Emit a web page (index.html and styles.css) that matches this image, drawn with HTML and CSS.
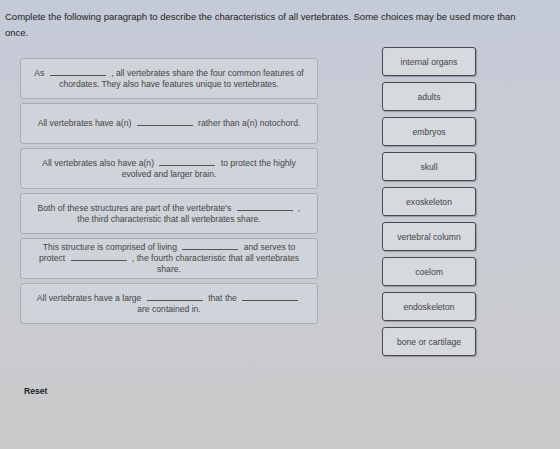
FILE: index.html
```html
<!DOCTYPE html>
<html lang="en">
<head>
  <meta charset="UTF-8">
  <title>Vertebrates - Drag and Drop</title>
  <link rel="stylesheet" href="styles.css">
</head>
<body>
  <p class="intro">Complete the following paragraph to describe the characteristics of all vertebrates. Some choices may be used more than once.</p>

  <div class="task">
    <div class="prompts">
      <div class="prompt"><p>As <span class="blank"></span> , all vertebrates share the four common features of<br>chordates. They also have features unique to vertebrates.</p></div>
      <div class="prompt"><p>All vertebrates have a(n) <span class="blank"></span> rather than a(n) notochord.</p></div>
      <div class="prompt"><p>All vertebrates also have a(n) <span class="blank"></span> to protect the highly<br>evolved and larger brain.</p></div>
      <div class="prompt"><p>Both of these structures are part of the vertebrate's <span class="blank"></span> ,<br>the third characteristic that all vertebrates share.</p></div>
      <div class="prompt"><p>This structure is comprised of living <span class="blank"></span> and serves to<br>protect <span class="blank"></span> , the fourth characteristic that all vertebrates<br>share.</p></div>
      <div class="prompt"><p>All vertebrates have a large <span class="blank"></span> that the <span class="blank"></span><br>are contained in.</p></div>
    </div>

    <div class="choices">
      <button class="choice">internal organs</button>
      <button class="choice">adults</button>
      <button class="choice">embryos</button>
      <button class="choice">skull</button>
      <button class="choice">exoskeleton</button>
      <button class="choice">vertebral column</button>
      <button class="choice">coelom</button>
      <button class="choice">endoskeleton</button>
      <button class="choice">bone or cartilage</button>
    </div>
  </div>

  <a href="#" class="reset">Reset</a>
</body>
</html>
```

FILE: styles.css
```css
* { margin:0; padding:0; box-sizing:border-box; }
body { font-family: "Liberation Sans", Arial, sans-serif; background: linear-gradient(180deg, #c4cad7 0%, #c8ccd4 45%, #cacaca 100%); color:#333; height:449px; overflow:hidden; }
.intro { font-size:9.5px; line-height:16px; color:#222; padding:9px 30px 0 5px; }
/* drag and drop area */
.task { display:flex; align-items:flex-start; padding-left:20px; gap:64px; margin-top:6px; }
.prompts { width:298px; display:flex; flex-direction:column; gap:4px; margin-top:11px; }
.prompt { height:41px; border:1px solid #a9acb3; border-radius:3px; background:#cfd3da; display:flex; align-items:center; justify-content:center; padding:0 8px; text-align:center; }
.prompt p { font-size:8.6px; line-height:11px; color:#454545; white-space:nowrap; }
.blank { display:inline-block; width:56px; height:7px; border-bottom:1px solid #555; margin:0 3px; vertical-align:baseline; }
.choice { height:29px; border:1.5px solid #4a4a4e; border-radius:3px; background:#d6d9de; box-shadow:1px 1px 1px rgba(0,0,0,0.25); font-family:inherit; font-size:8.6px; color:#444; cursor:pointer; }
.choices { width:94px; display:flex; flex-direction:column; gap:6px; }
.reset { display:inline-block; margin:30px 0 0 24px; font-size:8.6px; font-weight:bold; color:#222; text-decoration:none; }
```
